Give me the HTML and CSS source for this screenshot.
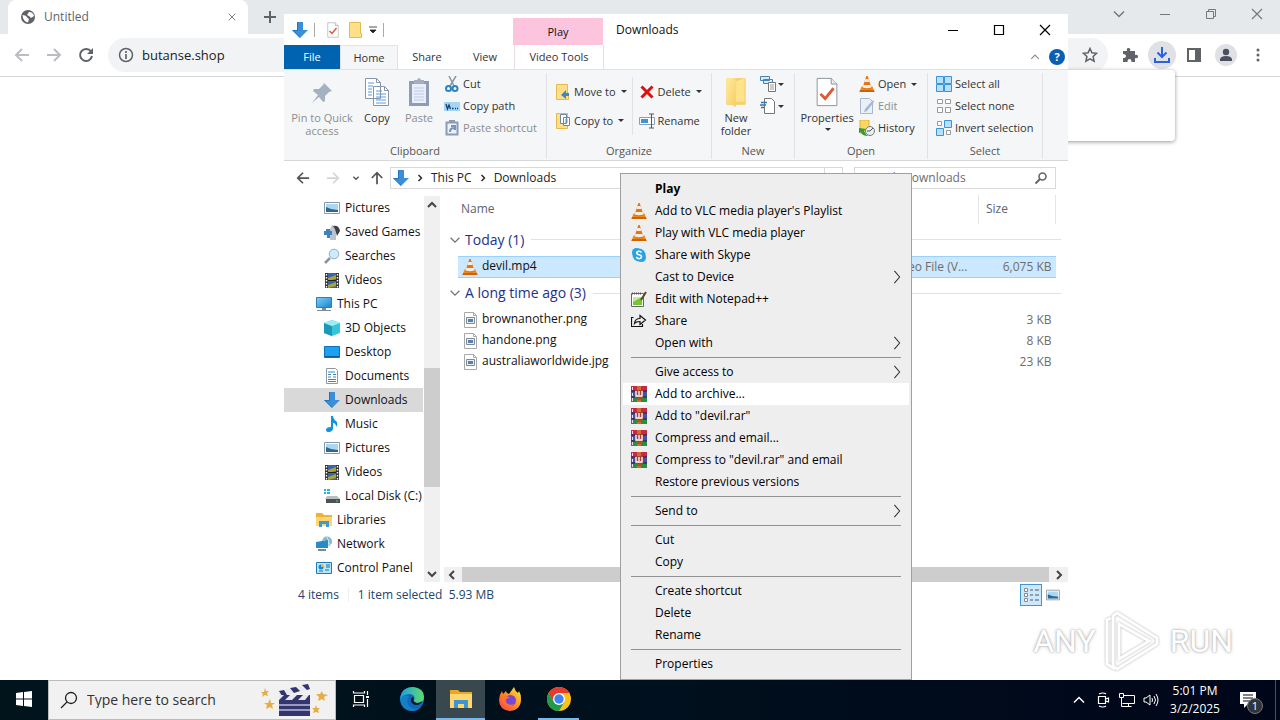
FILE: index.html
```html
<!DOCTYPE html>
<html lang="en">

<head>
    <meta charset="UTF-8">
    <meta name="viewport" content="width=device-width, initial-scale=1.0">
    <title>Untitled</title>
    <link rel="stylesheet" href="styles.css">
</head>

<body>
    <!-- Shared icons -->
    <svg class="sprite" aria-hidden="true">
        <linearGradient id="gBlue" x1="0" y1="0" x2="1" y2="1"><stop offset="0" stop-color="#7fd0f8"/><stop offset="1" stop-color="#1583d2"/></linearGradient>
        <linearGradient id="gFolder" x1="0" y1="0" x2="1" y2="1"><stop offset="0" stop-color="#ffe9a0"/><stop offset="1" stop-color="#f7cf62"/></linearGradient>
        <linearGradient id="gEdge" x1="0" y1="0" x2="1" y2="0"><stop offset="0" stop-color="#1b9de2"/><stop offset="1" stop-color="#5fdc6a"/></linearGradient>
        <linearGradient id="gFox" x1="0" y1="1" x2="1" y2="0"><stop offset="0" stop-color="#ff3650"/><stop offset=".5" stop-color="#ff8a1f"/><stop offset="1" stop-color="#fff04a"/></linearGradient>
        <symbol id="down" viewBox="0 0 16 16"><path d="M5 0h6v8h5l-8 8-8-8h5z" fill="#3a8fd8"/><path d="M5 0h1v9H2l6 6v1L0 8h5z" fill="#2274bd"/></symbol>
        <symbol id="cone" viewBox="0 0 16 16"><path d="M2.500 10.500h11l2 5.500H.5z" fill="#f08a1a"/><path d="M1 14h14l.5 2H.5z" fill="#c96508"/><path d="M7.300 0h1.400l4 12.500q-4.700 2-9.400 0z" fill="#e87410"/><path d="M6.400 3h3.200l1 3H5.400zM4.400 9h7.200l.8 2.500q-4.400 1.500-8.800 0z" fill="#f1eeea"/></symbol>
        <symbol id="check" viewBox="0 0 24 32"><path d="M1.500 1.500h15l6 6v23h-21z" fill="#fff" stroke="#8b9096"/><path d="M16.500 1.500v6h6" fill="#e8eaed" stroke="#8b9096"/><path d="m5 18 5 5 9-11" fill="none" stroke="#dd5a35" stroke-width="3"/></symbol>
        <symbol id="folder" viewBox="0 0 20 28"><path d="M1 1h18v25H1z" fill="#f4cf6c"/><path d="M1 1h8l1 3v24l-9-4z" fill="url(#gFolder)"/><path d="M10 4l8-3v22h-8z" fill="#ffe28a"/></symbol>
        <symbol id="smallfolder" viewBox="0 0 16 16"><path d="M2.500.5h11v11h1v4h-12z" fill="#ffe08a" stroke="#e5b94c"/></symbol>
        <symbol id="pin" viewBox="0 0 24 24"><path d="m14 2 8 8-3 1-4 4v5l-2 1-4-5-7 6 6-8-5-4 1-2h5l4-4z" fill="#a5b0c0"/></symbol>
        <symbol id="copy" viewBox="0 0 26 30"><path d="M1.500 1.500h11l4 4v16h-15zM9.500 9.500h11l4 4v15h-15z" fill="#fff" stroke="#8795a6"/><path d="M12.500 1.500v4h4M20.500 9.500v4h4" fill="none" stroke="#8795a6"/><path d="M4 6h6M4 9h5M4 12h4M4 15h4M4 18h4M12 14h6M12 17h10M12 20h10M12 23h10M12 26h10" stroke="#5a9bdc"/></symbol>
        <symbol id="paste" viewBox="0 0 22 30"><path d="M1 4h20v25H1z" fill="#8e9cb4"/><path d="M4 7h14v19H4z" fill="#e8effa"/><path d="M6 3h3q2-4 4 0h3v4H6z" fill="#a4aebd"/><path d="M6 11h10M6 14h10M6 17h10M6 20h10M6 23h10" stroke="#bccbe4"/></symbol>
        <symbol id="cut" viewBox="0 0 16 16"><path d="m5 0 5 10M12 0 6 10" stroke="#8a96a3" stroke-width="1.500"/><g fill="none" stroke="#2d83c3" stroke-width="2"><ellipse cx="4.500" cy="12.500" rx="2.500" ry="2.500"/><ellipse cx="11" cy="12.500" rx="2.500" ry="2.500"/></g></symbol>
        <symbol id="path" viewBox="0 0 16 16"><path d="M0 4h16v9H0z" fill="#a5d4f6"/><path d="m2 6 1.500 5L5 7l1.500 4M8 10.500h1.500M11 10.500h1M13 10.500h1" fill="none" stroke="#123f6b" stroke-width="1.300"/></symbol>
        <symbol id="pasteshort" viewBox="0 0 16 16"><path d="M2.500 2.500h11v12h-11z" fill="#edf2fa" stroke="#8d9ab3" stroke-width="2"/><path d="M5 0h6v3H5z" fill="#8d9ab3"/><path d="M6 12q0-4 4-4M7 6h4v4" fill="none" stroke="#7593c4" stroke-width="2"/></symbol>
        <symbol id="moveto" viewBox="0 0 16 16"><path d="M1.500.5h11v10h1v5h-12z" fill="#ffe08a" stroke="#e5b94c"/><path d="M14 9h-3V6l-5 5 5 4v-3h3z" fill="#3b88c8"/></symbol>
        <symbol id="copyto" viewBox="0 0 16 16"><path d="M1.500.5h11v15h-11z" fill="#ffe08a" stroke="#e5b94c"/><path d="M5.500 1.500h6v9h-6zM8.500 4.500h6v8h-6z" fill="#fff" stroke="#6d87a5"/><path d="M10 7h3M10 9h3" stroke="#5a9bdc"/></symbol>
        <symbol id="delete" viewBox="0 0 16 16"><path d="m2.500 2.500 11 11M13.500 2.500l-11 11" stroke="#dc1111" stroke-width="3"/></symbol>
        <symbol id="rename" viewBox="0 0 16 16"><path d="M.5 4.500h15v7H.5z" fill="#fff" stroke="#8aa0b8"/><path d="M2 6h7v4H2z" fill="#4291d3"/><path d="M10 1h5M12.500 1v14M10 15h5" stroke="#555" fill="none"/></symbol>
        <symbol id="newitem" viewBox="0 0 16 16"><path d="M.5.500h9v4h-9zM3.500 3.500h9v4h-9z" fill="#d5ecfb" stroke="#4584b5"/><path d="M8.500 6.500h7v9h-7z" fill="#fff" stroke="#777"/><path d="M10 9h4M10 11h4M10 13h4" stroke="#999"/></symbol>
        <symbol id="easy" viewBox="0 0 16 16"><path d="M4.500.5h7l3 3v12h-10z" fill="#fff" stroke="#777"/><path d="M1 4.500h6M0 7h6M1 9.500h3" stroke="#3179b5" stroke-width="1.500"/></symbol>
        <symbol id="edit" viewBox="0 0 16 16"><path d="M1.500.5h9l3 3v12h-12z" fill="#eaf0f8" stroke="#a9b7cc"/><path d="m14 2-8 9-1 3 3-1 7-9z" fill="#a9b7cc"/></symbol>
        <symbol id="history" viewBox="0 0 16 16"><path d="M1 0h9v13H1z" fill="#ffd95e" stroke="#dfae35"/><circle cx="11" cy="11" r="4.500" fill="#e9eef0" stroke="#6f7f7b"/><path d="m11 11 3-3M11 11H8" stroke="#555"/><path d="m0 8 7 1-2 2q1 3 4 5-6 0-7-4l-2 1z" fill="#2f9b3d"/></symbol>
        <symbol id="selall" viewBox="0 0 16 16"><path d="M.5.5h7v7h-7zM8.500.5h7v7h-7zM.5 8.500h7v7h-7zM8.500 8.500h7v7h-7z" fill="#b9e0fb" stroke="#3794da"/></symbol>
        <symbol id="selnone" viewBox="0 0 16 16"><path d="M1.500 1.500h5v4h-5zM9.500 1.500h5v4h-5zM1.500 9.500h5v5h-5zM9.500 9.500h5v5h-5z" fill="#fff" stroke="#999"/></symbol>
        <symbol id="selinv" viewBox="0 0 16 16"><path d="M1.500 1.500h4v4h-4zM10.500 10.500h4v4h-4z" fill="#fff" stroke="#999"/><path d="M8.500.5h7v7h-7zM.5 8.500h7v7h-7z" fill="#b9e0fb" stroke="#3794da"/></symbol>
        <symbol id="picture" viewBox="0 0 16 16"><path d="M.5 2.500h15v11H.5z" fill="#fff" stroke="#8b98a5"/><path d="M2 4h12v8H2z" fill="#a9d7f4"/><path d="m2 7 5 2 7 1v2H2z" fill="#2f668c"/></symbol>
        <symbol id="games" viewBox="0 0 16 16"><path d="M8 1l4 2v13H6V5z" fill="#b9c4ce"/><path d="M9 2q6-1 7 5l-3 5-2-7z" fill="#3c3f45"/><path d="M0 7h2V5h4v2h2v4H6v3H3v-3H0z" fill="#3d82bb"/></symbol>
        <symbol id="searches" viewBox="0 0 16 16"><path d="m1 15 5-5" stroke="#8b949c" stroke-width="2.500"/><circle cx="10" cy="6" r="4.800" fill="#cdeaff" stroke="#96adbf"/></symbol>
        <symbol id="video" viewBox="0 0 16 16"><path d="M1 1h14v15H1z" fill="#333"/><path d="M4 1h8v15H4z" fill="#3b60b5"/><path d="m4 6 8-3v4l-8 2zM4 13l8-3v4l-8 2z" fill="#a8a633"/><path d="M2.500 2v14M13.500 2v14" stroke="#fff" stroke-width="1.400" stroke-dasharray="1.500 1.500"/><path d="M4 8.500h8" stroke="#222"/></symbol>
        <symbol id="pc" viewBox="0 0 16 16"><path d="M.5 1.500h15v10H.5z" fill="url(#gBlue)" stroke="#2c7eb8"/><path d="M6 12h4v2H6zM1 14h14v1H1z" fill="#7b8b97"/></symbol>
        <symbol id="cube" viewBox="0 0 16 16"><path d="m8 0 8 3v10l-8 3-8-3V3z" fill="#37c5dc"/><path d="m0 3 8 3v10l-8-3z" fill="#1b99b7"/><path d="m8 0 8 3-8 3-8-3z" fill="#9eeef5"/></symbol>
        <symbol id="desk" viewBox="0 0 16 16"><path d="M.5 2.500h15v11H.5z" fill="#1ba0f2" stroke="#0b71b8"/><path d="M1 12h14v1H1z" fill="#0b5e9b"/></symbol>
        <symbol id="docs" viewBox="0 0 16 16"><path d="M2.500.5h9l2 2v13h-11z" fill="#fff" stroke="#8b98a5"/><path d="M4 4h7M4 6.500h3M9 6.500h3M4 9h3M9 9h3M4 11.500h8M4 13.500h8" stroke="#3e88bd"/></symbol>
        <symbol id="music" viewBox="0 0 16 16"><path d="M7 0h2q0 3 4 6 1 3-1 5 0-4-3-4v6q-1 3-4 3t-3-2q0-3 5-3z" fill="#1493dc"/></symbol>
        <symbol id="disk" viewBox="0 0 16 16"><path d="M3 8h10l3 3H1z" fill="#b9bec1"/><path d="M2 11h14v4H2z" fill="#4b5155"/><path d="M12 13h2" stroke="#59e159"/><path d="M0 1h2v2H0zM3 1h3v2H3zM0 4h2v2H0zM3 4h3v2H3z" fill="#22b5dd"/></symbol>
        <symbol id="lib" viewBox="0 0 16 16"><path d="M0 1h6l2 2h8v11H0z" fill="#eeb238"/><path d="M0 5h16v9H0z" fill="#ffd66b"/><path d="M3 9h10v6h-3v-3H6v3H3z" fill="#3e9ad5"/></symbol>
        <symbol id="net" viewBox="0 0 16 16"><circle cx="11" cy="5.500" r="5" fill="#80b8d2"/><path d="M7 4q4 1 8 5M11 1q3 4 1 9" stroke="#d3edf5" fill="none"/><path d="m0 6 12-2v8L0 12z" fill="#288bc7"/><path d="M2 14h8" stroke="#728b9b" stroke-width="2"/></symbol>
        <symbol id="control" viewBox="0 0 16 16"><path d="M.5 2.500h15v11H.5z" fill="#b9e7fa" stroke="#1a7dbb"/><circle cx="5" cy="7" r="2.500" fill="#1987ca"/><path d="M5 7V4a3 3 0 0 1 3 3z" fill="#f0b63c"/><path d="M10 5h4M10 7h4M3 11h4M9 10h4" stroke="#176da8"/></symbol>
        <symbol id="image" viewBox="0 0 16 16"><path d="M2.500.5h9l3 3v12h-12z" fill="#fff" stroke="#a9a9a9"/><path d="M11.500.5v3h3" fill="none" stroke="#a9a9a9"/><path d="M4.500 5.500h8v6h-8z" fill="#e7f0f8" stroke="#7d8a99"/><path d="M6 7h5v3H6z" fill="#5c7fa8"/></symbol>
        <symbol id="skype" viewBox="0 0 16 16"><circle cx="5.500" cy="5.500" r="4.500" fill="#27a2e6"/><circle cx="10.500" cy="10.500" r="4.500" fill="#27a2e6"/><circle cx="8" cy="8" r="6.500" fill="#27a2e6"/><path d="M10.500 5.500Q9.500 4 7.500 4.300 5.500 4.700 5.700 6.300 6 7.500 8 7.800q2.600.5 2.500 2-.2 1.700-2.300 1.900-2 0-3-1.700" fill="none" stroke="#fff" stroke-width="1.500"/></symbol>
        <symbol id="npp" viewBox="0 0 16 16"><path d="M.5 2.500h12v13H.5z" fill="#fff" stroke="#666"/><path d="M2 6h9v8H2z" fill="#74c532"/><path d="M2 6h9L2 11z" fill="#c5e8a0"/><path d="M1 2.500h10" stroke="#555" stroke-dasharray="1 1" stroke-width="2"/><path d="m15 1-5 8" stroke="#5c4a28" stroke-width="2"/></symbol>
        <symbol id="share" viewBox="0 0 16 16"><path d="M2.500 4.500H.5v9h11V11M3.500 10.500Q4 5.500 9 5.500v-3l5.500 4.500L9 11.500v-3q-4 0-5.500 2z" fill="none" stroke="#111" stroke-width="1.200"/></symbol>
        <symbol id="rar" viewBox="0 0 16 16"><path d="M0 0h16v5H0z" fill="#c32a48"/><path d="M0 5h16v6H0z" fill="#4452a8"/><path d="M0 11h16v5H0z" fill="#25903f"/><path d="M6 0h4v16H6z" fill="#d96a24"/><path d="M1.500 1v3M1.500 7v3M1.500 12v3" stroke="#ecd9ee"/><path d="M0 5h16M0 11h16" stroke="#2b1d33"/><path d="M4 4h8v8H4z" fill="#a3423a"/><path d="M5 5v5h6V5M8 5v4" fill="none" stroke="#fff" stroke-width="1.300"/><path d="M6 13h4" stroke="#8f3c12"/></symbol>
        <symbol id="arrowL" viewBox="0 0 16 16"><path d="M15 8H2M8 2 2 8l6 6" fill="none" stroke="currentColor" stroke-width="2"/></symbol>
        <symbol id="chev" viewBox="0 0 16 16"><path d="m3 5.500 5 5 5-5" fill="none" stroke="currentColor" stroke-width="1.500"/></symbol>
        <symbol id="arrow" viewBox="0 0 12 12"><path d="m2 4 4 4 4-4" fill="none" stroke="currentColor" stroke-width="2"/></symbol>
        <symbol id="next" viewBox="0 0 16 16"><path d="m5 1 6 7-6 7" fill="none" stroke="currentColor" stroke-width="1.200"/></symbol>
        <symbol id="crumb" viewBox="0 0 8 8"><path d="m2.500 1 3 3-3 3" fill="none" stroke="currentColor" stroke-width="1.400"/></symbol>
        <symbol id="close" viewBox="0 0 12 12"><path d="m1 1 10 10M11 1 1 11" stroke="currentColor" stroke-width="1.200"/></symbol>
        <symbol id="min" viewBox="0 0 12 12"><path d="M1 6.500h10" stroke="currentColor"/></symbol>
        <symbol id="max" viewBox="0 0 12 12"><path d="M1.500 1.500h9v9h-9z" fill="none" stroke="currentColor" stroke-width="1.200"/></symbol>
    </svg>

    <!-- Browser -->
    <div class="browser">
        <div class="tabstrip">
            <div class="tab">
                <svg class="i16" viewBox="0 0 16 16"><circle cx="8" cy="8" r="7" fill="#5f6368"/><path d="M2.500 6q3 0 4 1.500T9 10l-1 3.500Q3 13 2.500 6zM9 3q4 0 5 4l-3 2-2-2-2-1z" fill="#fff"/></svg>
                <span>Untitled</span>
                <button class="icon-btn tab-close" aria-label="Close tab"><svg class="i8"><use href="#close"/></svg></button>
            </div>
            <button class="icon-btn new-tab" aria-label="New tab"><svg class="i12" viewBox="0 0 12 12"><path d="M6 0v12M0 6h12" stroke="#5f6368" stroke-width="2"/></svg></button>
            <div class="caption">
                <button aria-label="Search tabs"><svg class="i16"><use href="#chev"/></svg></button>
                <button aria-label="Minimize"><svg class="i12"><use href="#min"/></svg></button>
                <button aria-label="Restore"><svg class="i12" viewBox="0 0 12 12"><path d="M1.500 3.500h7v7h-7zM3.500 3.500v-2h7v7h-2" fill="none" stroke="currentColor"/></svg></button>
                <button aria-label="Close"><svg class="i12"><use href="#close"/></svg></button>
            </div>
        </div>
        <div class="toolbar">
            <button class="icon-btn faded" aria-label="Back"><svg class="i16"><use href="#arrowL"/></svg></button>
            <button class="icon-btn faded" aria-label="Forward"><svg class="i16 flip"><use href="#arrowL"/></svg></button>
            <button class="icon-btn" aria-label="Reload"><svg class="i16" viewBox="0 0 16 16"><path d="M13 4.500A6 6 0 1 0 14 9" fill="none" stroke="currentColor" stroke-width="2"/><path d="M15 1v6H9z" fill="currentColor"/></svg></button>
            <div class="omnibox">
                <svg class="i16" viewBox="0 0 16 16"><circle cx="8" cy="8" r="6.500" fill="none" stroke="#5f6368" stroke-width="1.500"/><path d="M8 7v5M8 4v2" stroke="#5f6368" stroke-width="1.700"/></svg>
                <input type="text" value="butanse.shop" aria-label="Address">
                <button class="icon-btn" aria-label="Bookmark"><svg class="i16" viewBox="0 0 16 16"><path d="m8 1.500 1.900 4.300 4.700.5-3.500 3.200 1 4.700L8 11.800l-4.100 2.400 1-4.700L1.400 6.300l4.700-.5z" fill="none" stroke="currentColor" stroke-width="1.500"/></svg></button>
            </div>
            <div class="actions">
                <button class="icon-btn" aria-label="Extensions"><svg class="i16" viewBox="0 0 16 16"><path d="M1 4h4q-1-3 1.500-3T8 4h5v4q3-1 3 1.500T13 11v4H9.500q0-3-2-3t-2 3H1v-4q3 0 3-2T1 7z" fill="currentColor"/></svg></button>
                <button class="icon-btn dl" aria-label="Downloads"><svg class="i18" viewBox="0 0 18 18"><path d="M9 1v9M4.500 6.500 9 11l4.500-4.500M2 12v4h14v-4" fill="none" stroke="#2b62d9" stroke-width="2"/></svg></button>
                <button class="icon-btn" aria-label="Side panel"><svg class="i16" viewBox="0 0 16 16"><path d="M2 2h12v12H2z" fill="none" stroke="currentColor" stroke-width="2"/><path d="M9 2h5v12H9z" fill="currentColor"/></svg></button>
                <button class="icon-btn profile" aria-label="Profile"><svg class="i16" viewBox="0 0 16 16"><circle cx="8" cy="5" r="3.200" fill="#4b5060"/><path d="M2 14v-2q1-3 6-3t6 3v2z" fill="#4b5060"/></svg></button>
                <button class="icon-btn" aria-label="Menu"><svg class="i16" viewBox="0 0 16 16" fill="#5f6368"><circle cx="8" cy="3" r="1.500"/><circle cx="8" cy="8" r="1.500"/><circle cx="8" cy="13" r="1.500"/></svg></button>
            </div>
        </div>
        <div class="popover"></div>
    </div>

    <!-- File Explorer window -->
    <div class="explorer">
        <div class="titlebar">
            <div class="quick">
                <svg class="i16"><use href="#down"/></svg>
                <i class="tick"></i>
                <button class="icon-btn" aria-label="Properties"><svg class="i16"><use href="#check"/></svg></button>
                <button class="icon-btn" aria-label="New folder"><svg class="i16"><use href="#smallfolder"/></svg></button>
                <button class="icon-btn more" aria-label="Customize"><svg class="i8" viewBox="0 0 8 8"><path d="M0 1h8M1 4h6L4 7z" stroke="#222" stroke-width=".8" fill="#222"/></svg></button>
                <i class="tick"></i>
            </div>
            <span class="context-tab">Play</span>
            <span class="window-title">Downloads</span>
            <div class="caption dark">
                <button aria-label="Minimize window"><svg class="i12"><use href="#min"/></svg></button>
                <button aria-label="Maximize window"><svg class="i12"><use href="#max"/></svg></button>
                <button aria-label="Close window"><svg class="i12"><use href="#close"/></svg></button>
            </div>
        </div>
        <div class="ribbon-tabs">
            <button class="file">File</button>
            <button class="active">Home</button>
            <button>Share</button>
            <button>View</button>
            <button class="tools">Video Tools</button>
            <div class="help">
                <svg class="i12 up"><use href="#chev"/></svg>
                <button class="help-btn" aria-label="Help">?</button>
            </div>
        </div>

        <div class="ribbon">
            <section class="group">
                <div class="group-body">
                    <button class="big pin off"><svg class="i24"><use href="#pin"/></svg>Pin to Quick access</button>
                    <button class="big"><svg class="i30"><use href="#copy"/></svg>Copy</button>
                    <button class="big off"><svg class="i30"><use href="#paste"/></svg>Paste</button>
                    <div class="stack">
                        <button><svg class="i16"><use href="#cut"/></svg>Cut</button>
                        <button><svg class="i16"><use href="#path"/></svg>Copy path</button>
                        <button class="off"><svg class="i16"><use href="#pasteshort"/></svg>Paste shortcut</button>
                    </div>
                </div>
                <h2>Clipboard</h2>
            </section>
            <section class="group">
                <div class="group-body organize">
                    <div class="stack tall">
                        <button><svg class="i16"><use href="#moveto"/></svg>Move to<b class="caret"></b></button>
                        <button><svg class="i16"><use href="#copyto"/></svg>Copy to<b class="caret"></b></button>
                    </div>
                    <div class="stack tall second">
                        <button><svg class="i16"><use href="#delete"/></svg>Delete<b class="caret"></b></button>
                        <button><svg class="i16"><use href="#rename"/></svg>Rename</button>
                    </div>
                </div>
                <h2>Organize</h2>
            </section>
            <section class="group">
                <div class="group-body">
                    <button class="big folder"><svg class="i30"><use href="#folder"/></svg>New folder</button>
                    <div class="stack tight">
                        <button aria-label="New item"><svg class="i16"><use href="#newitem"/></svg><b class="caret"></b></button>
                        <button aria-label="Easy access"><svg class="i16"><use href="#easy"/></svg><b class="caret"></b></button>
                    </div>
                </div>
                <h2>New</h2>
            </section>
            <section class="group">
                <div class="group-body">
                    <button class="big props"><svg class="i30"><use href="#check"/></svg>Properties<b class="caret"></b></button>
                    <div class="stack">
                        <button><svg class="i16"><use href="#cone"/></svg>Open<b class="caret"></b></button>
                        <button class="off"><svg class="i16"><use href="#edit"/></svg>Edit</button>
                        <button><svg class="i16"><use href="#history"/></svg>History</button>
                    </div>
                </div>
                <h2>Open</h2>
            </section>
            <section class="group">
                <div class="group-body select">
                    <div class="stack">
                        <button><svg class="i16"><use href="#selall"/></svg>Select all</button>
                        <button><svg class="i16"><use href="#selnone"/></svg>Select none</button>
                        <button><svg class="i16"><use href="#selinv"/></svg>Invert selection</button>
                    </div>
                </div>
                <h2>Select</h2>
            </section>
        </div>

        <div class="address-row">
            <button class="icon-btn" aria-label="Go back"><svg class="i14"><use href="#arrowL"/></svg></button>
            <button class="icon-btn faint" aria-label="Go forward"><svg class="i14 flip"><use href="#arrowL"/></svg></button>
            <button class="icon-btn recent" aria-label="Recent"><svg class="i8"><use href="#arrow"/></svg></button>
            <button class="icon-btn" aria-label="Up"><svg class="i14 turn"><use href="#arrowL"/></svg></button>
            <div class="address">
                <svg class="i16"><use href="#down"/></svg>
                <svg class="i8"><use href="#crumb"/></svg>
                <a href="#">This PC</a>
                <svg class="i8"><use href="#crumb"/></svg>
                <a href="#">Downloads</a>
                <i class="refresh"></i>
            </div>
            <div class="search-box">
                <input type="text" placeholder="Search Downloads" aria-label="Search Downloads">
                <svg class="i14" viewBox="0 0 14 14"><circle cx="8.500" cy="5.500" r="3.500" fill="none" stroke="#666" stroke-width="1.600"/><path d="m6 8-4.500 4.500" stroke="#666" stroke-width="2"/></svg>
            </div>
        </div>

        <div class="panes">
            <nav class="tree">
                <a href="#"><svg class="i16"><use href="#picture"/></svg>Pictures</a>
                <a href="#"><svg class="i16"><use href="#games"/></svg>Saved Games</a>
                <a href="#"><svg class="i16"><use href="#searches"/></svg>Searches</a>
                <a href="#"><svg class="i16"><use href="#video"/></svg>Videos</a>
                <a href="#" class="root"><svg class="i16"><use href="#pc"/></svg>This PC</a>
                <a href="#"><svg class="i16"><use href="#cube"/></svg>3D Objects</a>
                <a href="#"><svg class="i16"><use href="#desk"/></svg>Desktop</a>
                <a href="#"><svg class="i16"><use href="#docs"/></svg>Documents</a>
                <a href="#" class="current"><svg class="i16"><use href="#down"/></svg>Downloads</a>
                <a href="#"><svg class="i16"><use href="#music"/></svg>Music</a>
                <a href="#"><svg class="i16"><use href="#picture"/></svg>Pictures</a>
                <a href="#"><svg class="i16"><use href="#video"/></svg>Videos</a>
                <a href="#"><svg class="i16"><use href="#disk"/></svg>Local Disk (C:)</a>
                <a href="#" class="root"><svg class="i16"><use href="#lib"/></svg>Libraries</a>
                <a href="#" class="root"><svg class="i16"><use href="#net"/></svg>Network</a>
                <a href="#" class="root"><svg class="i16"><use href="#control"/></svg>Control Panel</a>
            </nav>
            <div class="vscroll">
                <svg class="i12 up"><use href="#arrow"/></svg>
                <div class="track"><div class="thumb"></div></div>
                <svg class="i12"><use href="#arrow"/></svg>
            </div>
            <div class="files">
                <table>
                    <colgroup><col class="c-name"><col class="c-type"><col class="c-size"></colgroup>
                    <thead>
                        <tr><th>Name</th><th>Type</th><th class="size-head">Size</th></tr>
                    </thead>
                    <tbody>
                        <tr class="section"><td colspan="3"><div><svg class="i14"><use href="#chev"/></svg>Today (1)</div></td></tr>
                        <tr class="selected"><td><svg class="i16"><use href="#cone"/></svg>devil.mp4</td><td>MP4 Video File (V...</td><td>6,075 KB</td></tr>
                        <tr class="section"><td colspan="3"><div><svg class="i14"><use href="#chev"/></svg>A long time ago (3)</div></td></tr>
                        <tr><td><svg class="i16"><use href="#image"/></svg>brownanother.png</td><td></td><td>3 KB</td></tr>
                        <tr><td><svg class="i16"><use href="#image"/></svg>handone.png</td><td></td><td>8 KB</td></tr>
                        <tr><td><svg class="i16"><use href="#image"/></svg>australiaworldwide.jpg</td><td></td><td>23 KB</td></tr>
                    </tbody>
                </table>
                <div class="hscroll">
                    <svg class="i12 left"><use href="#arrow"/></svg>
                    <div class="bar"></div>
                    <svg class="i12 right"><use href="#arrow"/></svg>
                </div>
            </div>
        </div>

        <div class="status">
            <span>4 items</span>
            <i class="tick"></i>
            <span>1 item selected&nbsp; 5.93 MB</span>
            <div class="views">
                <button class="on" aria-label="Details view"><svg class="i16" viewBox="0 0 16 16"><path d="M1.500 1.500h3v3h-3zM1.500 6.500h3v3h-3zM1.500 11.500h3v3h-3z" fill="#fff" stroke="#888"/><path d="M7 3h3M7 8h3M7 13h3M12 3h4M12 8h4M12 13h4" stroke="#555"/></svg></button>
                <button aria-label="Thumbnail view"><svg class="i14"><use href="#picture"/></svg></button>
            </div>
        </div>
    </div>

    <!-- Context menu -->
    <div class="menu" role="menu">
        <button class="default">Play</button>
        <button><svg class="i16"><use href="#cone"/></svg>Add to VLC media player's Playlist</button>
        <button><svg class="i16"><use href="#cone"/></svg>Play with VLC media player</button>
        <button><svg class="i16"><use href="#skype"/></svg>Share with Skype</button>
        <button>Cast to Device<svg class="i14 sub"><use href="#next"/></svg></button>
        <button><svg class="i16"><use href="#npp"/></svg>Edit with Notepad++</button>
        <button><svg class="i16"><use href="#share"/></svg>Share</button>
        <button>Open with<svg class="i14 sub"><use href="#next"/></svg></button>
        <hr>
        <button>Give access to<svg class="i14 sub"><use href="#next"/></svg></button>
        <button class="hover"><svg class="i16"><use href="#rar"/></svg>Add to archive...</button>
        <button><svg class="i16"><use href="#rar"/></svg>Add to "devil.rar"</button>
        <button><svg class="i16"><use href="#rar"/></svg>Compress and email...</button>
        <button><svg class="i16"><use href="#rar"/></svg>Compress to "devil.rar" and email</button>
        <button>Restore previous versions</button>
        <hr>
        <button>Send to<svg class="i14 sub"><use href="#next"/></svg></button>
        <hr>
        <button>Cut</button>
        <button>Copy</button>
        <hr>
        <button>Create shortcut</button>
        <button>Delete</button>
        <button>Rename</button>
        <hr>
        <button>Properties</button>
    </div>

    <!-- Watermark -->
    <div class="watermark">
        <span>ANY</span>
        <svg viewBox="0 0 58 62"><path d="M7 8 3 10v44l8 5"/><path d="m13 3 40 25v6L13 59l-4-3V6z"/><path d="m15 14 30 17-30 18z"/></svg>
        <span>RUN</span>
    </div>

    <!-- Taskbar -->
    <div class="taskbar">
        <button class="task start" aria-label="Start"><svg class="i16" viewBox="0 0 16 16"><path d="m0 2 7-1v6.500H0zM8 1l8-1v7.500H8zM0 8.500h7V15l-7-1zM8 8.500h8V16l-8-1z" fill="#fff"/></svg></button>
        <div class="task-search">
            <svg class="i18" viewBox="0 0 18 18"><circle cx="11" cy="7" r="5.500" fill="none" stroke="#222" stroke-width="1.300"/><path d="m7 11-6 6" stroke="#222" stroke-width="1.300"/></svg>
            <input type="text" placeholder="Type here to search" aria-label="Type here to search">
            <svg class="clapper" viewBox="0 0 68 36">
                <path d="M18 18h31v16H18z" fill="#34356f"/><path d="M18 23h31M18 28h31" stroke="#b9b9dc" stroke-width="1.300"/>
                <path d="m17 9 30-7 2 5-30 8z" fill="#e9e9f4"/><path d="m18 9 5-1 3 5-5 1zM29 6l6-1 4 4-6 2zM41 3l6-1 2 5-3 1z" fill="#34356f"/>
                <path d="M18 13h31v5H18z" fill="#e9e9f4"/><path d="M23 13h6l-5 5h-6zM36 13h6l-5 5h-6zM48 13h1v5h-5z" fill="#34356f"/>
                <g fill="#e5ad42"><path d="m4 6 1 3 3 0-2 2 1 3-3-1-3 2 1-3-2-2h3zM9 17l1 4h4l-3 2 1 4-3-2-4 2 1-4-3-2h4zM61 9l1 3 5 1-4 2 1 4-3-2-4 2 1-4-3-3h4zM55 23l1 3h3l-2 2 1 3-3-1-3 1 1-3-2-2h3z"/></g>
            </svg>
        </div>
        <button class="task" aria-label="Task view"><svg class="i18" viewBox="0 0 18 18"><path d="M2.500 5.500h9v7h-9zM1.500 1v2h11V1M1.500 17v-2h11v2M15.500 1v4M15.500 9v8" fill="none" stroke="#fff" stroke-width="1.200"/><path d="M14 6h3v2h-3z" fill="#fff"/></svg></button>
        <button class="task apps" aria-label="Edge"><svg class="i24" viewBox="0 0 24 24"><circle cx="12" cy="12" r="12" fill="#1267b8"/><path d="M0 11Q2 0 13 0q11 1 11 10 0 6-7 6-4 0-3-3 2-5-4-6Q3 7 0 13z" fill="url(#gEdge)"/><path d="M9 9q-4 6 1 11 5 4 11 0-4 4-9 4Q1 23 0 12q2-5 9-3z" fill="#1480c8"/><path d="M14 11q-2 4 3 5 3 0 5-2-1 4-6 4-6-1-5-6 1-3 3-1z" fill="#06182b"/></svg></button>
        <button class="task open" aria-label="File Explorer"><svg class="i24" viewBox="0 0 24 24"><path d="M1 3h8l2 2h12v16H1z" fill="#e9a824"/><path d="M1 7h22v14H1z" fill="#ffd76e"/><path d="M5 13h14v8h-4v-4H9v4H5z" fill="#3d95d1"/></svg></button>
        <button class="task" aria-label="Firefox"><svg class="i24" viewBox="0 0 24 24"><path d="M12 24Q1 23 1 13q0-5 3-9l1 3 3-3q0 2 3 3l5-7q1 4 4 6l1-2q2 3 2 8 0 11-11 12z" fill="url(#gFox)"/><circle cx="12.500" cy="13.500" r="5.500" fill="#7b45d6"/><path d="M4 10q3-3 8 1-5 0-4 4 2 4 8 2-4 5-9 1-4-3-3-8z" fill="#ff722b"/></svg></button>
        <button class="task running" aria-label="Chrome"><svg class="i24" viewBox="0 0 24 24"><circle cx="12" cy="12" r="12" fill="#fbc116"/><path d="M1.600 6A12 12 0 0 1 22.400 6H12l-5.500 9z" fill="#e33b2e"/><path d="M1.600 6A12 12 0 0 0 12 24l5.200-9H6.800z" fill="#229a48"/><circle cx="12" cy="12" r="6" fill="#fff"/><circle cx="12" cy="12" r="4.700" fill="#4084f3"/></svg></button>
        <div class="tray">
            <svg class="i16 up"><use href="#chev"/></svg>
            <svg class="i16" viewBox="0 0 16 16" fill="none" stroke="#fff"><path d="M3.500 4.500h7v7h-7zM10.500 7l3-1v4l-3-1M4 2q4-2 7 0M4 14q4 2 7 0" stroke-width="1.200"/></svg>
            <svg class="i16" viewBox="0 0 16 16" fill="none" stroke="#fff"><path d="M4.500 3.500h11v8H3.500M.5 1.500h4v4h-4zM2.500 5.500v9h10M9.500 11.500v3"/></svg>
            <svg class="i16" viewBox="0 0 16 16" fill="none" stroke="#fff"><path d="M1 6h2l4-3v10l-4-3H1zM9 6q1 2 0 4M11 4q3 4 0 8M13 2q4 6 0 12"/></svg>
            <div class="clock"><span>5:01 PM</span><span>3/2/2025</span></div>
            <button class="notify" aria-label="Notifications"><svg class="i18" viewBox="0 0 18 18"><path d="M1 1h16v12H9l-4 4v-4H1z" fill="#fff"/><path d="M4 4h10M4 7h10M4 10h7" stroke="#00061a" stroke-width="1.200"/></svg><span class="badge">1</span></button>
            <i class="peek"></i>
        </div>
    </div>
</body>

</html>
```
FILE: styles.css
```css
/* Reset */
* {
    margin: 0;
    padding: 0;
    box-sizing: border-box;
}

body {
    height: 100vh;
    display: flex;
    flex-direction: column;
    position: relative;
    overflow: hidden;
    background: #fff;
    font-family: "Open Sans", "Noto Sans", sans-serif;
    font-size: 12px;
    line-height: 16px;
    color: #111;
}

button,
input {
    font: inherit;
    color: inherit;
    border: none;
    background: none;
    outline: none;
}

a {
    color: inherit;
    text-decoration: none;
}

svg {
    flex: none;
    display: block;
}

/* Icon sizes */
.sprite { position: absolute; width: 0; height: 0; }
.i8 { width: 8px; height: 8px; }
.i12 { width: 12px; height: 12px; }
.i14 { width: 14px; height: 14px; }
.i16 { width: 16px; height: 16px; }
.i18 { width: 18px; height: 18px; }
.i24 { width: 24px; height: 24px; }
.i30 { width: 30px; height: 30px; }

.flip,
.up { transform: rotate(180deg); }
.turn,
.left { transform: rotate(90deg); }
.right { transform: rotate(-90deg); }

.icon-btn {
    display: flex;
    align-items: center;
    justify-content: center;
}

/* Browser */
.browser {
    flex: 1;
    position: relative;
}

.tabstrip {
    height: 34px;
    display: flex;
    padding-left: 8px;
    background: #e6e9ec;
}

.tab {
    width: 240px;
    display: flex;
    align-items: center;
    gap: 8px;
    padding: 0 12px;
    border-radius: 8px 8px 0 0;
    background: #fff;
    color: #5f6368;
}

.tab-close {
    margin-left: auto;
    color: #5f6368;
}

.new-tab {
    width: 44px;
}

.caption {
    display: flex;
    margin-left: auto;
    color: #777;
}

.caption button {
    width: 46px;
    height: 28px;
    display: flex;
    align-items: center;
    justify-content: center;
}

.toolbar {
    height: 43px;
    display: flex;
    align-items: center;
    padding: 0 6px;
    border-bottom: 1px solid #d5d7da;
    color: #5f6368;
}

.toolbar .icon-btn {
    width: 32px;
    height: 28px;
}

.toolbar .faded {
    color: #bbbdc0;
}

.omnibox {
    flex: 1;
    height: 34px;
    display: flex;
    align-items: center;
    gap: 8px;
    margin-left: 6px;
    padding: 0 2px 0 10px;
    border-radius: 17px;
    background: #f1f3f4;
}

.omnibox input {
    flex: 1;
    font-size: 13px;
    color: #202124;
}

.actions {
    display: flex;
    margin-left: 6px;
}

.toolbar .dl,
.toolbar .profile {
    width: 28px;
    margin: 0 2px;
    border-radius: 50%;
    background: #dfe1e5;
}

.toolbar .profile {
    width: 22px;
    height: 22px;
    margin: 3px 5px;
}

.popover {
    position: absolute;
    top: 70px;
    right: 105px;
    width: 320px;
    height: 71px;
    border-radius: 4px;
    background: #fff;
    box-shadow: 0 1px 4px rgba(0, 0, 0, 0.4);
}

/* Explorer window */
.explorer {
    position: absolute;
    top: 14px;
    left: 284px;
    right: 212px;
    background: #fff;
}

.titlebar {
    height: 31px;
    display: flex;
    align-items: center;
}

.quick {
    width: 229px;
    display: flex;
    align-items: center;
    gap: 6px;
    padding-left: 8px;
}

.tick {
    width: 1px;
    height: 14px;
    background: #aaa;
}

.quick .icon-btn {
    width: 16px;
}

.quick .icon-btn:first-of-type {
    margin-left: 4px;
}

.quick .more {
    width: 8px;
}

.context-tab {
    width: 90px;
    align-self: flex-end;
    padding: 6px 0 5px;
    background: #fcc5dd;
    text-align: center;
    font-size: 11px;
}

.window-title {
    padding-left: 13px;
}

.dark {
    color: #000;
}

.ribbon-tabs {
    height: 24px;
    display: flex;
    font-size: 11px;
    color: #333;
}

.ribbon-tabs button {
    width: 58px;
}

.ribbon-tabs .file {
    width: 56px;
    background: #0063b1;
    color: #fff;
}

.ribbon-tabs .active {
    background: #f5f6f7;
    border: 1px solid #e1e3e5;
    border-bottom: none;
}

.ribbon-tabs .tools {
    width: 90px;
    border: solid #eadde3;
    border-width: 0 1px;
}

.help {
    display: flex;
    align-items: center;
    gap: 8px;
    margin-left: auto;
    padding-right: 3px;
    color: #888;
}

.help .help-btn {
    width: 16px;
    height: 16px;
    border-radius: 50%;
    background: #0a5fb4;
    color: #fff;
    font-weight: bold;
}

/* Ribbon */
.ribbon {
    height: 92px;
    display: grid;
    grid-template-columns: 263px 165px 83px 133px 115px;
    background: #f4f6f8;
    border-top: 1px solid #dfe1e3;
    border-bottom: 1px solid #d5d7d9;
    font-size: 11px;
    color: #333;
}

.group {
    display: flex;
    flex-direction: column;
    margin: 3px 0 1px;
    border-right: 1px solid #e0e2e5;
}

.group h2 {
    text-align: center;
    font-size: 11px;
    font-weight: normal;
    line-height: 16px;
    color: #555;
}

.group-body {
    flex: 1;
    display: flex;
    padding-left: 4px;
}

.big {
    width: 42px;
    display: flex;
    flex-direction: column;
    align-items: center;
    padding-top: 4px;
    line-height: 13px;
}

.big svg {
    margin-bottom: 4px;
}

.ribbon .pin {
    width: 68px;
}

.pin svg {
    margin: 4px 0 6px;
}

.folder {
    width: 40px;
}

.props {
    width: 56px;
}

.props .caret {
    margin-top: 4px;
}

.off {
    color: #8b8e92;
}

.stack {
    display: flex;
    flex-direction: column;
    padding-left: 4px;
}

.stack button {
    height: 22px;
    display: flex;
    align-items: center;
    gap: 3px;
    white-space: nowrap;
}

.caret {
    border: solid transparent;
    border-width: 3px 3px 0;
    border-top-color: #333;
    margin-left: 2px;
}

.tall {
    margin-top: 4px;
    padding: 0 5px 0 4px;
}

.tall button {
    height: 29px;
}

.second {
    height: 58px;
    padding-left: 6px;
    border-left: 1px solid #e0e2e5;
}

.tight button {
    gap: 0;
}

/* Address bar */
.address-row {
    height: 34px;
    display: flex;
    align-items: center;
    padding: 0 12px 0 4px;
    color: #555;
}

.address-row .icon-btn {
    width: 30px;
}

.address-row .faint {
    color: #d5d5d5;
}

.address-row .recent {
    width: 16px;
}

.address-row .icon-btn:nth-child(4) {
    width: 26px;
}

.address {
    flex: 1;
    height: 22px;
    display: flex;
    align-items: center;
    gap: 7px;
    padding-left: 2px;
    border: 1px solid #d9d9d9;
    color: #222;
}

.refresh {
    width: 18px;
    height: 20px;
    margin-left: auto;
    border-left: 1px solid #d9d9d9;
}

.search-box {
    width: 202px;
    height: 22px;
    display: flex;
    align-items: center;
    margin-left: 11px;
    padding: 0 7px;
    border: 1px solid #d9d9d9;
}

.search-box input {
    flex: 1;
    min-width: 0;
}

.search-box input::placeholder {
    color: #6d6d6d;
}

/* Navigation tree */
.panes {
    display: flex;
    height: 387px;
}

.tree {
    width: 139px;
    padding-top: 1px;
    color: #111;
}

.tree a {
    height: 24px;
    display: flex;
    align-items: center;
    gap: 5px;
    padding-left: 40px;
    white-space: nowrap;
}

.tree .root {
    padding-left: 32px;
}

.tree .current {
    background: #d9d9d9;
}

.vscroll {
    width: 16px;
    display: flex;
    flex-direction: column;
    align-items: center;
    margin: 1px 4px 0 1px;
    padding: 3px 0 2px;
    background: #f0f0f0;
    color: #444;
}

.track {
    flex: 1;
    width: 100%;
    padding-top: 157px;
}

.thumb {
    height: 119px;
    background: #cdcdcd;
}

/* File list */
.files {
    flex: 1;
    display: flex;
    flex-direction: column;
}

table {
    margin: 0 12px 0 14px;
    border-collapse: collapse;
    table-layout: fixed;
}

.c-type { width: 116px; }
.c-size { width: 77px; }

th {
    height: 29px;
    padding: 0 3px 2px;
    text-align: left;
    font-weight: normal;
    color: #5c6470;
}

.size-head {
    padding-left: 7px;
    border: solid #e5e5e5;
    border-width: 0 1px;
}

td {
    height: 21px;
    color: #6d6d6d;
    white-space: nowrap;
}

td:first-child {
    color: #111;
}

td:last-child {
    padding-right: 4px;
    text-align: right;
}

td svg {
    display: inline-block;
    margin: 0 4px;
    vertical-align: middle;
}

.section td {
    height: 32px;
}

.section td:last-child {
    padding: 0;
    text-align: left;
    color: #1e3287;
}

.section div {
    display: flex;
    align-items: center;
    margin: 0 -5px 0 -10px;
    font-size: 14px;
}

.section svg {
    margin: 0 3px 0 0;
    color: #777;
}

.section div::after {
    content: "";
    flex: 1;
    height: 1px;
    margin-left: 7px;
    background: #e2e2e2;
}

.selected td {
    background: #cce8ff;
    border: solid #99d1ff;
    border-width: 1px 0;
}

.hscroll {
    height: 15px;
    display: flex;
    align-items: center;
    gap: 4px;
    margin-top: auto;
    padding: 0 3px 0 2px;
    background: #f0f0f0;
    color: #444;
}

.bar {
    flex: 1;
    height: 15px;
    background: #cdcdcd;
}

/* Status bar */
.status {
    height: 26px;
    display: flex;
    align-items: center;
    gap: 9px;
    padding: 0 4px 0 14px;
    color: #24446f;
}

.status .tick {
    background: #eee;
}

.views {
    display: flex;
    margin-left: auto;
}

.views button {
    width: 22px;
    height: 22px;
    display: flex;
    align-items: center;
    justify-content: center;
}

.views .on {
    background: #cce8ff;
    border: 1px solid #3f97ce;
}

/* Context menu */
.menu {
    position: absolute;
    top: 173px;
    left: 620px;
    z-index: 3;
    width: 292px;
    display: flex;
    flex-direction: column;
    padding: 4px 2px;
    border: 1px solid #a0a0a0;
    background: #eee;
    color: #000;
}

.menu button {
    height: 22px;
    display: flex;
    align-items: center;
    padding-left: 32px;
}

.menu .i16 {
    margin: 0 8px 0 -24px;
}

.menu .sub {
    margin: 0 5px 0 auto;
    color: #333;
}

.menu .default {
    font-weight: bold;
}

.menu .hover {
    background: #fff;
}

.menu hr {
    margin: 3px 8px;
    border: none;
    border-top: 1px solid #919191;
}

/* Watermark */
.watermark {
    position: absolute;
    right: 47px;
    bottom: 48px;
    display: flex;
    align-items: center;
    gap: 8px;
    color: #fff;
    font-family: Roboto, sans-serif;
    font-size: 32px;
    line-height: 62px;
    text-shadow: 0 0 2px #999, 0 0 4px #ccc;
}

.watermark svg {
    width: 58px;
    height: 62px;
    fill: none;
    stroke: #fff;
    stroke-width: 3;
    filter: drop-shadow(0 0 1px #aaa);
}

/* Taskbar */
.taskbar {
    height: 40px;
    display: flex;
    position: relative;
    background: linear-gradient(90deg, #00141c, #00101d 50%, #00061a);
    color: #fff;
}

.task {
    width: 49px;
    display: flex;
    align-items: center;
    justify-content: center;
    border-bottom: 2px solid transparent;
}

.start {
    width: 48px;
}

.apps {
    margin-left: 2px;
}

.open {
    background: #39484f;
    border-color: #76b9ed;
}

.running {
    border-image: linear-gradient(90deg, transparent 10%, #76b9ed 10%, #76b9ed 90%, transparent 90%) 1;
}

.task-search {
    width: 288px;
    display: flex;
    align-items: center;
    gap: 9px;
    padding: 0 6px 0 11px;
    border: 1px solid #bbb;
    background: #f1f1f1;
}

.task-search input {
    flex: 1;
    min-width: 0;
    font-size: 14px;
}

.task-search input::placeholder {
    color: #333;
}

.clapper {
    width: 68px;
    height: 36px;
}

.tray {
    display: flex;
    align-items: center;
    gap: 8px;
    margin-left: auto;
}

.clock {
    width: 56px;
    display: flex;
    flex-direction: column;
    align-items: center;
    margin: 0 8px 0 0;
    line-height: 18px;
}

.notify {
    position: relative;
}

.badge {
    position: absolute;
    top: 7px;
    left: 8px;
    width: 16px;
    height: 16px;
    border: 1px solid #777;
    border-radius: 50%;
    background: #30343c;
    font-size: 11px;
    line-height: 14px;
}

.peek {
    height: 40px;
    width: 5px;
    margin-left: 10px;
    border-left: 1px solid #4b5060;
}
```
